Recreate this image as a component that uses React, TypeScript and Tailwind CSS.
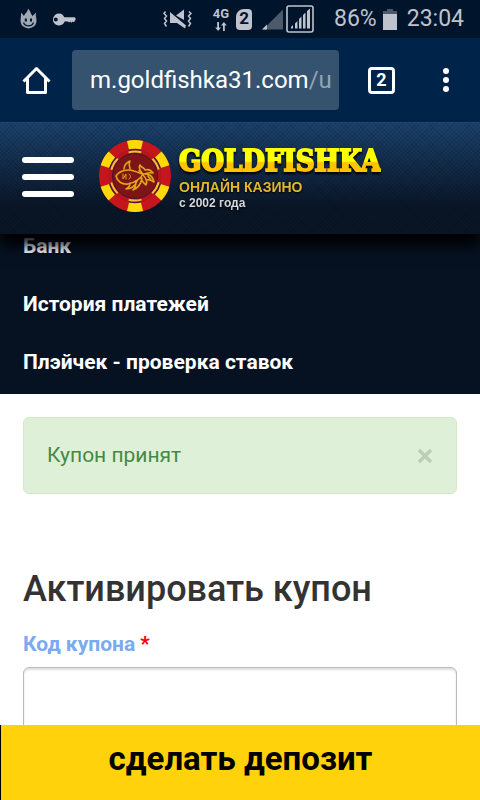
import { useState } from "react";

const menuItems = ["Банк", "История платежей", "Плэйчек - проверка ставок"];

function StatusBar() {
  return (
    <div className="flex h-[38px] shrink-0 items-center bg-[#00152c] pr-4 pl-5 text-[#bfc3cd]">
      {/* flame */}
      <svg width="17" height="22" viewBox="0 0 17 22" className="shrink-0" aria-hidden="true">
        <path d="M1 4.500 4 8C5 5 8 4 8 .5c2.600 2 2.200 5 4.600 7.500L16 4.500C15.200 8 17 10.500 16.400 14a8 7.600 0 0 1-15.800 0C.2 10.500 1.500 8 1 4.500Z" fill="#a1a8b4" />
        <path d="M4.800 10.500h2v3h-2zM10 10.500h2v3h-2z" fill="#00152c" />
        <path d="M3.500 14.500c1.500 4.500 8.500 4.500 10 0" fill="none" stroke="#00152c" strokeWidth="1.300" />
      </svg>
      {/* key */}
      <svg width="23" height="13" viewBox="0 0 23 13" className="ml-4 shrink-0" fill="currentColor" aria-hidden="true">
        <path fillRule="evenodd" d="M6 .5a6 6 0 1 0 5.600 8H15l1 1 1.200-1 1.200 1.200L19.800 8.500l1 .8L22.500 7v-2L21.500 4.200H11.300A6 6 0 0 0 6 .5ZM2.800 4.500a2 2 0 1 1 0 4 2 2 0 0 1 0-4Z" />
      </svg>
      {/* vibrate, sound off */}
      <svg width="29" height="22" viewBox="0 0 29 22" className="ml-auto shrink-0" aria-hidden="true">
        <path d="M2.500 3.500 1 5.500 3.500 8 1.500 10.500 3.500 13l-2 2.500 2 3M26 3.500l2 2-2.500 2.500 2 2.500-2 2.500 2 2.500-2 3" fill="none" stroke="currentColor" strokeWidth="1.500" />
        <path d="M13 7.500 21 1.500V12z" fill="currentColor" />
        <path d="M7 4 23 17.500l-1 3-8-5.500H7z" fill="currentColor" />
      </svg>
      <div className="ml-5 flex w-[18px] shrink-0 flex-col items-center">
        <span className="text-[13px] leading-3 font-bold">4G</span>
        <svg width="12" height="9" viewBox="0 0 12 9" fill="currentColor" className="mt-0.5" aria-hidden="true">
          <path d="M2.200 0h1.800v5.500h2L3.100 9 .2 5.500h2zM8 9h1.800V3.500h2L8.900 0 6 3.500h2z" />
        </svg>
      </div>
      <div className="ml-1.5 flex h-[21px] w-4 shrink-0 items-center justify-center rounded-sm rounded-tl-lg bg-[#bfc3cd] text-[17px] font-bold text-[#00152c]">2</div>
      <svg width="22" height="21" viewBox="0 0 22 21" className="ml-2.5 shrink-0" aria-hidden="true">
        <path d="M1 20.500 21 .5v20z" fill="#4b5a6b" />
        <path d="m0 20.500 5-5v5z" fill="currentColor" />
      </svg>
      <svg width="28" height="28" viewBox="0 0 28 28" className="ml-0.5 shrink-0" aria-hidden="true">
        <rect x="1" y="1" width="26" height="26" rx="2" fill="none" stroke="currentColor" strokeWidth="1.600" />
        <path d="M5 23.500v-1.500l2-2v3.500zM9 23.500v-5l2.500-2.500v7.500zM13 23.500V14l2.500-2.500v12zM17 23.500V10l2.500-2.500v16zM21 23.500V6l3-2.500v20z" fill="currentColor" />
      </svg>
      <span className="ml-5 shrink-0 text-[23px]">86%</span>
      <svg width="14" height="21" viewBox="0 0 14 21" className="ml-1.5 shrink-0" aria-hidden="true">
        <path d="M4 0h6v2h4v4H0V2h4z" fill="#4b5a6b" />
        <path d="M0 5h14v16H0z" fill="currentColor" />
      </svg>
      <span className="ml-2.5 shrink-0 text-[23px]">23:04</span>
    </div>
  );
}

function BrowserBar() {
  return (
    <div className="flex h-[84px] shrink-0 items-center bg-[#002449] pr-[31px] pl-5 text-white">
      <button type="button" aria-label="Home" className="shrink-0">
        <svg width="32" height="32" viewBox="0 0 32 32" fill="none" stroke="currentColor" strokeWidth="3" strokeLinejoin="round">
          <path d="M3.500 17.500 16.500 4.500 29.500 17.500M7.500 14.500V28.500H25.500V14.500" />
        </svg>
      </button>
      <div className="ml-5 flex h-[60px] min-w-0 flex-1 items-center rounded-sm bg-[#35526f] pl-[18px] text-2xl whitespace-nowrap">
        m.goldfishka31.com<span className="text-[#94a3b3]">/u</span>
      </div>
      <button type="button" aria-label="Tabs" className="ml-[29px] flex h-[27px] w-[27px] shrink-0 items-center justify-center rounded-sm border-3 border-white text-lg leading-none font-bold">
        2
      </button>
      <button type="button" aria-label="More" className="ml-12 shrink-0">
        <svg width="6" height="26" viewBox="0 0 6 26" fill="currentColor">
          <circle cx="3" cy="4" r="3" />
          <circle cx="3" cy="13" r="3" />
          <circle cx="3" cy="22" r="3" />
        </svg>
      </button>
    </div>
  );
}

function Chip() {
  return (
    <svg width="74" height="74" viewBox="0 0 74 74" className="shrink-0" aria-hidden="true">
      <circle cx="37" cy="38" r="36" fill="#07101d" opacity="0.5" />
      <circle cx="37" cy="36" r="31" fill="none" stroke="#c4161c" strokeWidth="10" />
      <circle cx="37" cy="36" r="31" fill="none" stroke="#ffd80a" strokeWidth="10" pathLength="120" strokeDasharray="8.500 11.500" strokeDashoffset="4.250" transform="rotate(-30 37 36)" />
      <circle cx="37" cy="36" r="26.500" fill="#b5151b" />
      <circle cx="37" cy="36" r="26.500" fill="none" stroke="#4a1545" strokeWidth="1.500" pathLength="120" strokeDasharray="9 11" strokeDashoffset="4.500" transform="rotate(-30 37 36)" />
      <circle cx="37" cy="36" r="24.500" fill="none" stroke="#f0c030" strokeWidth="2" pathLength="120" strokeDasharray="10 10" strokeDashoffset="5" transform="rotate(-30 37 36)" />
      <circle cx="37" cy="36" r="22.500" fill="#7d1517" stroke="#4a1030" strokeWidth="1" />
      <g fill="none" stroke="#dfa51b" strokeWidth="1.600" strokeLinecap="round" strokeLinejoin="round">
        <path d="M18 36c4-6 12-7 18-5 4 1 6 3 9 3-2 4-8 9-15 10-6 1-11-3-12-8Z" />
        <path d="M26 29c0-4 2-6 6-8-2 4 0 5 0 8M44 33c-2-3-4-5-2-8 1 3 4 2 5 5 3-1 6 0 8 3-4-1-6 0-9 1M46 34c4 0 8 0 10 8-3-2-5-3-8-2M45 35c3 3 5 6 3 10-2-2-4-3-5-7M32 43c0 3-2 5-4 6 6 0 9-3 11-8M38 41c0 4-1 7-3 9 5-2 8-6 9-12M50 36l3 4M41 31l4 3" />
        <path d="M25 34v5l3-5v5M31 34c2 1 2 4 0 5" strokeWidth="1" />
      </g>
    </svg>
  );
}

function SiteHeader() {
  return (
    <header className="relative z-10 flex h-28 shrink-0 items-center border-t border-[#1f4573] bg-[repeating-linear-gradient(45deg,#00000018_0_1px,transparent_1px_3px),repeating-linear-gradient(-45deg,#00000018_0_1px,transparent_1px_3px),linear-gradient(#1b426d,#0a1627_75%,#0a1525)] pb-1 pl-[22px] shadow-[0_11px_14px_#000]">
      <button type="button" aria-label="Меню" className="flex w-[52px] shrink-0 flex-col gap-[11px]">
        <span className="h-1.5 rounded-full bg-white" />
        <span className="h-1.5 rounded-full bg-white" />
        <span className="h-1.5 rounded-full bg-white" />
      </button>
      <a href="#" className="ml-6 flex items-center gap-[7px]">
        <Chip />
        <div className="flex flex-col">
          <span className="bg-linear-to-b from-[#ffff00] from-50% to-[#ffc400] to-55% bg-clip-text font-['DejaVu_Serif_Condensed','DejaVu_Serif',serif] text-[29px] leading-9 font-bold text-transparent drop-shadow-[0_2px_1px_#000] [-webkit-text-stroke:2px_transparent]">
            GOLDFISHKA
          </span>
          <span className="font-['Liberation_Sans',sans-serif] text-sm leading-4 font-bold text-[#e3b62c] drop-shadow-[0_1px_1px_#000]">ОНЛАЙН КАЗИНО</span>
          <span className="font-['Liberation_Sans',sans-serif] text-xs leading-4 font-bold text-[#d4d8dc] drop-shadow-[0_1px_1px_#000]">с 2002 года</span>
        </div>
      </a>
    </header>
  );
}

export default function App() {
  const [showAlert, setShowAlert] = useState(true);
  const [code, setCode] = useState("");

  return (
    <div className="flex h-screen flex-col overflow-hidden bg-white font-['Roboto',sans-serif]">
      <StatusBar />
      <BrowserBar />
      <SiteHeader />

      <div className="min-h-0 flex-1 overflow-hidden">
        {/* first row is scrolled under the header */}
        <nav className="-mt-4 bg-[#061122] px-[23px] pb-0.5">
          {menuItems.map((item) => (
            <a key={item} href="#" className="flex h-[58px] items-center text-[21px] font-bold text-white">
              {item}
            </a>
          ))}
        </nav>

        <main className="px-[23px] pt-[23px]">
          {showAlert && (
            <div role="alert" className="flex h-[77px] items-center justify-between rounded-md border border-[#d3e9c4] bg-[#dff0d8] px-[23px] text-[21px] text-[#438a45]">
              Купон принят
              <button type="button" aria-label="Закрыть" onClick={() => setShowAlert(false)} className="text-[#bacfb5]">
                <svg width="16" height="16" viewBox="0 0 16 16" stroke="currentColor" strokeWidth="3.500">
                  <path d="m2 2 12 12M14 2 2 14" />
                </svg>
              </button>
            </div>
          )}

          <h1 className="mt-[75px] text-4xl font-medium text-[#333]">Активировать купон</h1>

          <label htmlFor="coupon" className="mt-[19px] block text-[21px] leading-8 font-bold text-[#7aaaf0]">
            Код купона <span className="text-[#f00]">*</span>
          </label>
          <input
            id="coupon"
            type="text"
            value={code}
            onChange={(e) => setCode(e.target.value)}
            className="mt-[7px] h-20 w-full rounded-md border border-[#bbb] px-4 text-2xl shadow-[inset_0_2px_2px_#00000020] outline-none"
          />
        </main>
      </div>

      <button type="button" className="h-[75px] shrink-0 border-l border-black bg-[#ffd20c] pb-2 text-[33px] font-bold text-black">
        сделать депозит
      </button>
    </div>
  );
}
